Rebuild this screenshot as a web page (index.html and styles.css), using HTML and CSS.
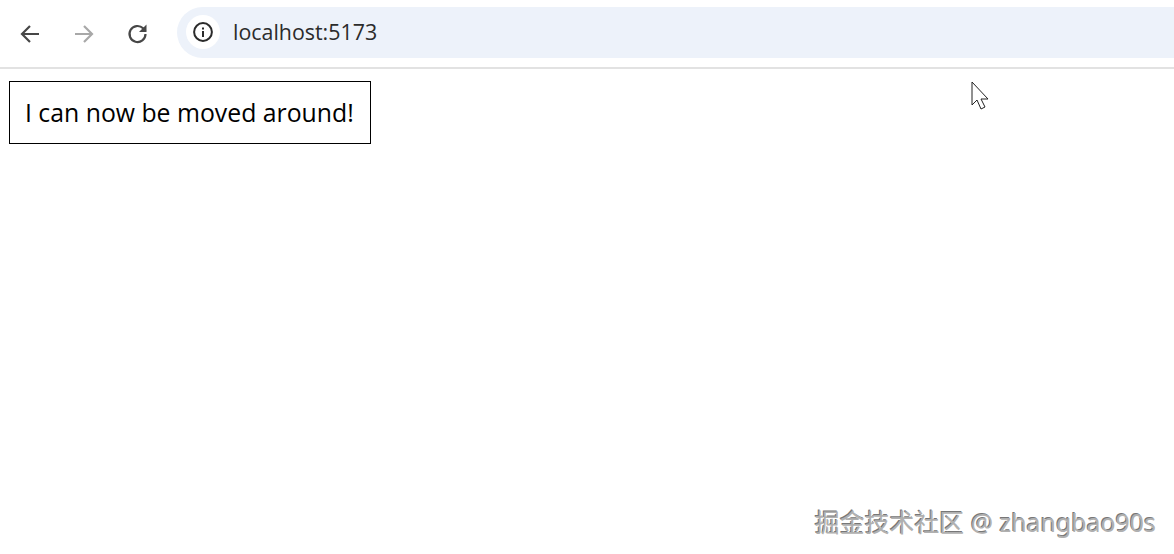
FILE: index.html
```html
<!DOCTYPE html>
<html lang="en">
<head>
    <meta charset="UTF-8">
    <meta name="viewport" content="width=device-width, initial-scale=1.0">
    <title>localhost:5173</title>
    <link rel="stylesheet" href="styles.css">
</head>
<body>
    <!-- Browser toolbar -->
    <div class="toolbar">
        <svg class="nav-icon" width="24" height="24" viewBox="0 0 24 24"><path d="M21 12H5M12 4L4 12l8 8" fill="none" stroke="#474747" stroke-width="2.2"/></svg>
        <svg class="nav-icon" width="24" height="24" viewBox="0 0 24 24"><path d="M3 12h16M12 4l8 8-8 8" fill="none" stroke="#a8a8a8" stroke-width="2.2"/></svg>
        <svg class="nav-icon" width="24" height="24" viewBox="0 0 24 24"><path d="M19.5 12a8 8 0 1 1-2.4-5.7L19.5 9" fill="none" stroke="#474747" stroke-width="2.2"/><path d="M20.5 2.5V10H13z" fill="#474747"/></svg>
        <div class="address-bar">
            <span class="info-badge">
                <svg width="22" height="22" viewBox="0 0 22 22"><circle cx="11" cy="11" r="8.9" fill="none" stroke="#2b2b2b" stroke-width="2"/><rect x="10" y="10" width="2" height="6" fill="#2b2b2b"/><rect x="10" y="6.5" width="2" height="2" fill="#2b2b2b"/></svg>
            </span>
            <span class="url">localhost:5173</span>
        </div>
    </div>

    <!-- Page content -->
    <div class="page">
        <div class="move-box">I can now be moved around!</div>
    </div>

    <!-- Mouse pointer -->
    <svg class="pointer" width="20" height="30" viewBox="0 0 20 30"><path d="M1 1v23l5-5 4 9 4-2-4-8h7z" fill="#fff" stroke="#222" stroke-width="1"/></svg>

    <div class="watermark">掘金技术社区 @ zhangbao90s</div>
</body>
</html>
```

FILE: styles.css
```css
body {
    margin: 0;
    height: 554px;
    overflow: hidden;
    background-color: #fff;
    font-family: 'Open Sans', 'Noto Sans', sans-serif;
    position: relative;
}

.toolbar {
    height: 67px;
    display: flex;
    align-items: center;
    border-bottom: 2px solid #e2e2e2;
    padding-left: 18px;
    gap: 30px;
}

.nav-icon {
    flex: none;
}

.address-bar {
    flex: 1;
    height: 51px;
    margin-left: -3px;
    margin-top: -3px;
    background-color: #edf2fa;
    border-radius: 26px 0 0 26px;
    display: flex;
    align-items: center;
    padding-left: 9px;
}

.info-badge {
    width: 34px;
    height: 34px;
    border-radius: 50%;
    background-color: #fff;
    display: flex;
    align-items: center;
    justify-content: center;
}

.url {
    margin-left: 13px;
    font-size: 21.4px;
    line-height: 28px;
    color: #2b2b2b;
}

.page {
    padding: 12px 9px;
}

.move-box {
    width: fit-content;
    border: 1px solid #000;
    padding: 15px 16px 15px 15px;
    font-size: 24.8px;
    line-height: 31px;
    color: #000;
}

.pointer {
    position: absolute;
    left: 971px;
    top: 81px;
}

.watermark {
    position: absolute;
    right: 18px;
    bottom: 17px;
    font-family: 'Noto Sans', 'Noto Sans CJK SC', sans-serif;
    font-size: 24.9px;
    line-height: 30px;
    color: #b0b0b0;
    text-shadow: 1px 1px 0 #fff, -1px -1px 0 #777;
}
```
